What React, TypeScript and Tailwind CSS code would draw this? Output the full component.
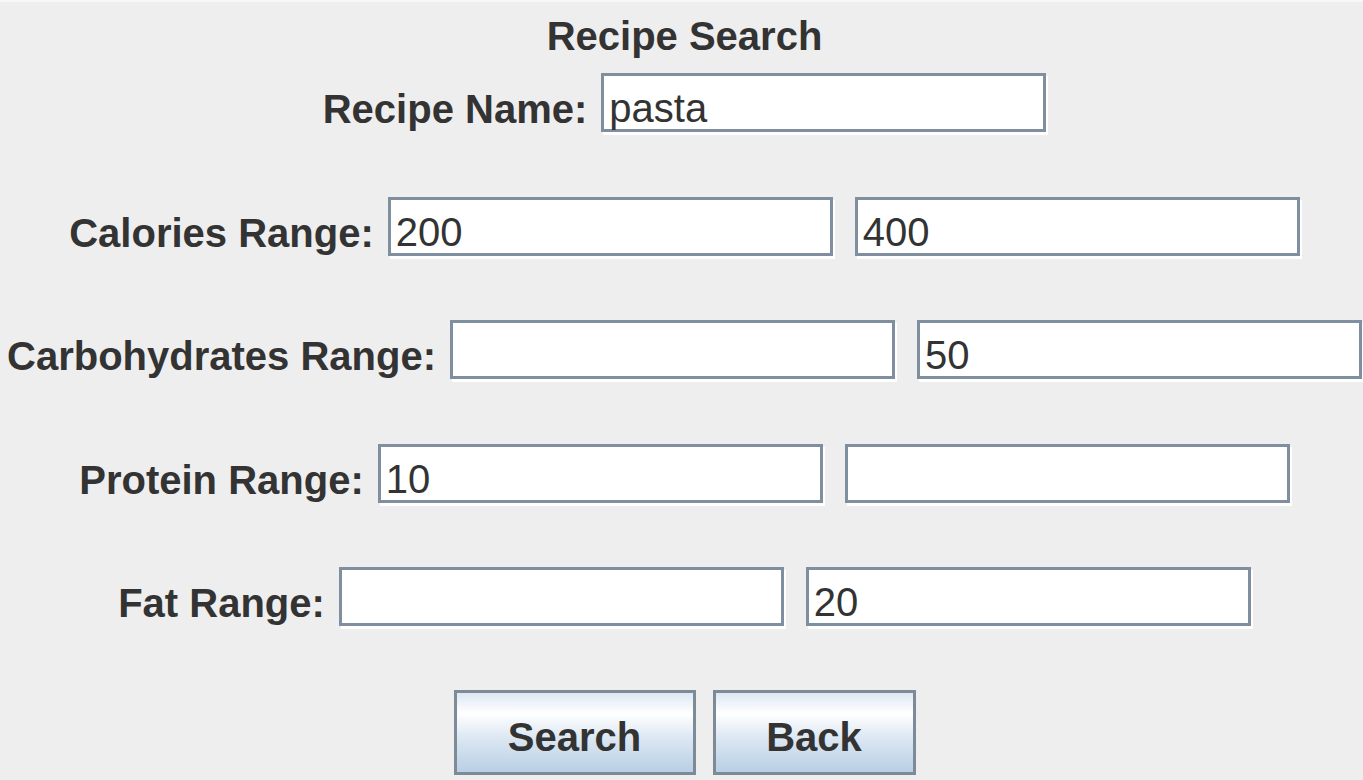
import React from 'react';

const font = { fontFamily: '"Liberation Sans", Arial, sans-serif' };

// Metal-style text field: grey etched border with a white drop line bottom/right
const Field: React.FC<{ value?: string }> = ({ value }) => (
  <div className="w-[445px] h-[59px] shrink-0 border-[3px] border-[#7f8fa0] bg-white pl-[5px] pt-[12px] text-[40px] leading-[40px] text-[#333333] shadow-[2px_3px_0_#ffffff]">
    {value}
  </div>
);

const Row: React.FC<{ label: string; values: (string | undefined)[]; className?: string }> = ({
  label,
  values,
  className,
}) => (
  <div className={`flex justify-center items-start ${className ?? ''}`}>
    <div className="mt-[16px] mr-[14px] text-[40px] leading-[40px] font-bold text-[#333333] whitespace-nowrap">
      {label}
    </div>
    <div className="flex gap-[22px]">
      {values.map((v, i) => (
        <Field key={i} value={v} />
      ))}
    </div>
  </div>
);

const MetalButton: React.FC<{ label: string; width: string }> = ({ label, width }) => (
  <button
    className={`${width} h-[85px] border-[3px] border-[#7d8b99] pt-[9px] text-[40px] leading-[40px] font-bold text-[#333333] bg-[linear-gradient(to_bottom,#dde8f3_0%,#ffffff_26%,#dde8f3_56%,#b8cfe5_100%)]`}
  >
    {label}
  </button>
);

export default function App() {
  return (
    <div className="w-[1363px] h-[780px] overflow-hidden bg-[#eeeeee]" style={font}>
      <div className="h-[2px] bg-[#f5f7fa]" />
      <div className="flex flex-col pl-[6px]">
        <div className="mt-[14px] text-center text-[40px] leading-[40px] font-bold text-[#333333]">
          Recipe Search
        </div>
        <Row className="mt-[17px]" label="Recipe Name:" values={['pasta']} />
        <Row className="mt-[65px]" label="Calories Range:" values={['200', '400']} />
        <Row className="mt-[64px]" label="Carbohydrates Range:" values={[undefined, '50']} />
        <Row className="mt-[65px]" label="Protein Range:" values={['10', undefined]} />
        <Row className="mt-[64px]" label="Fat Range:" values={[undefined, '20']} />
        <div className="mt-[64px] flex justify-center gap-[17px]">
          <MetalButton label="Search" width="w-[242px]" />
          <MetalButton label="Back" width="w-[203px]" />
        </div>
      </div>
    </div>
  );
}
